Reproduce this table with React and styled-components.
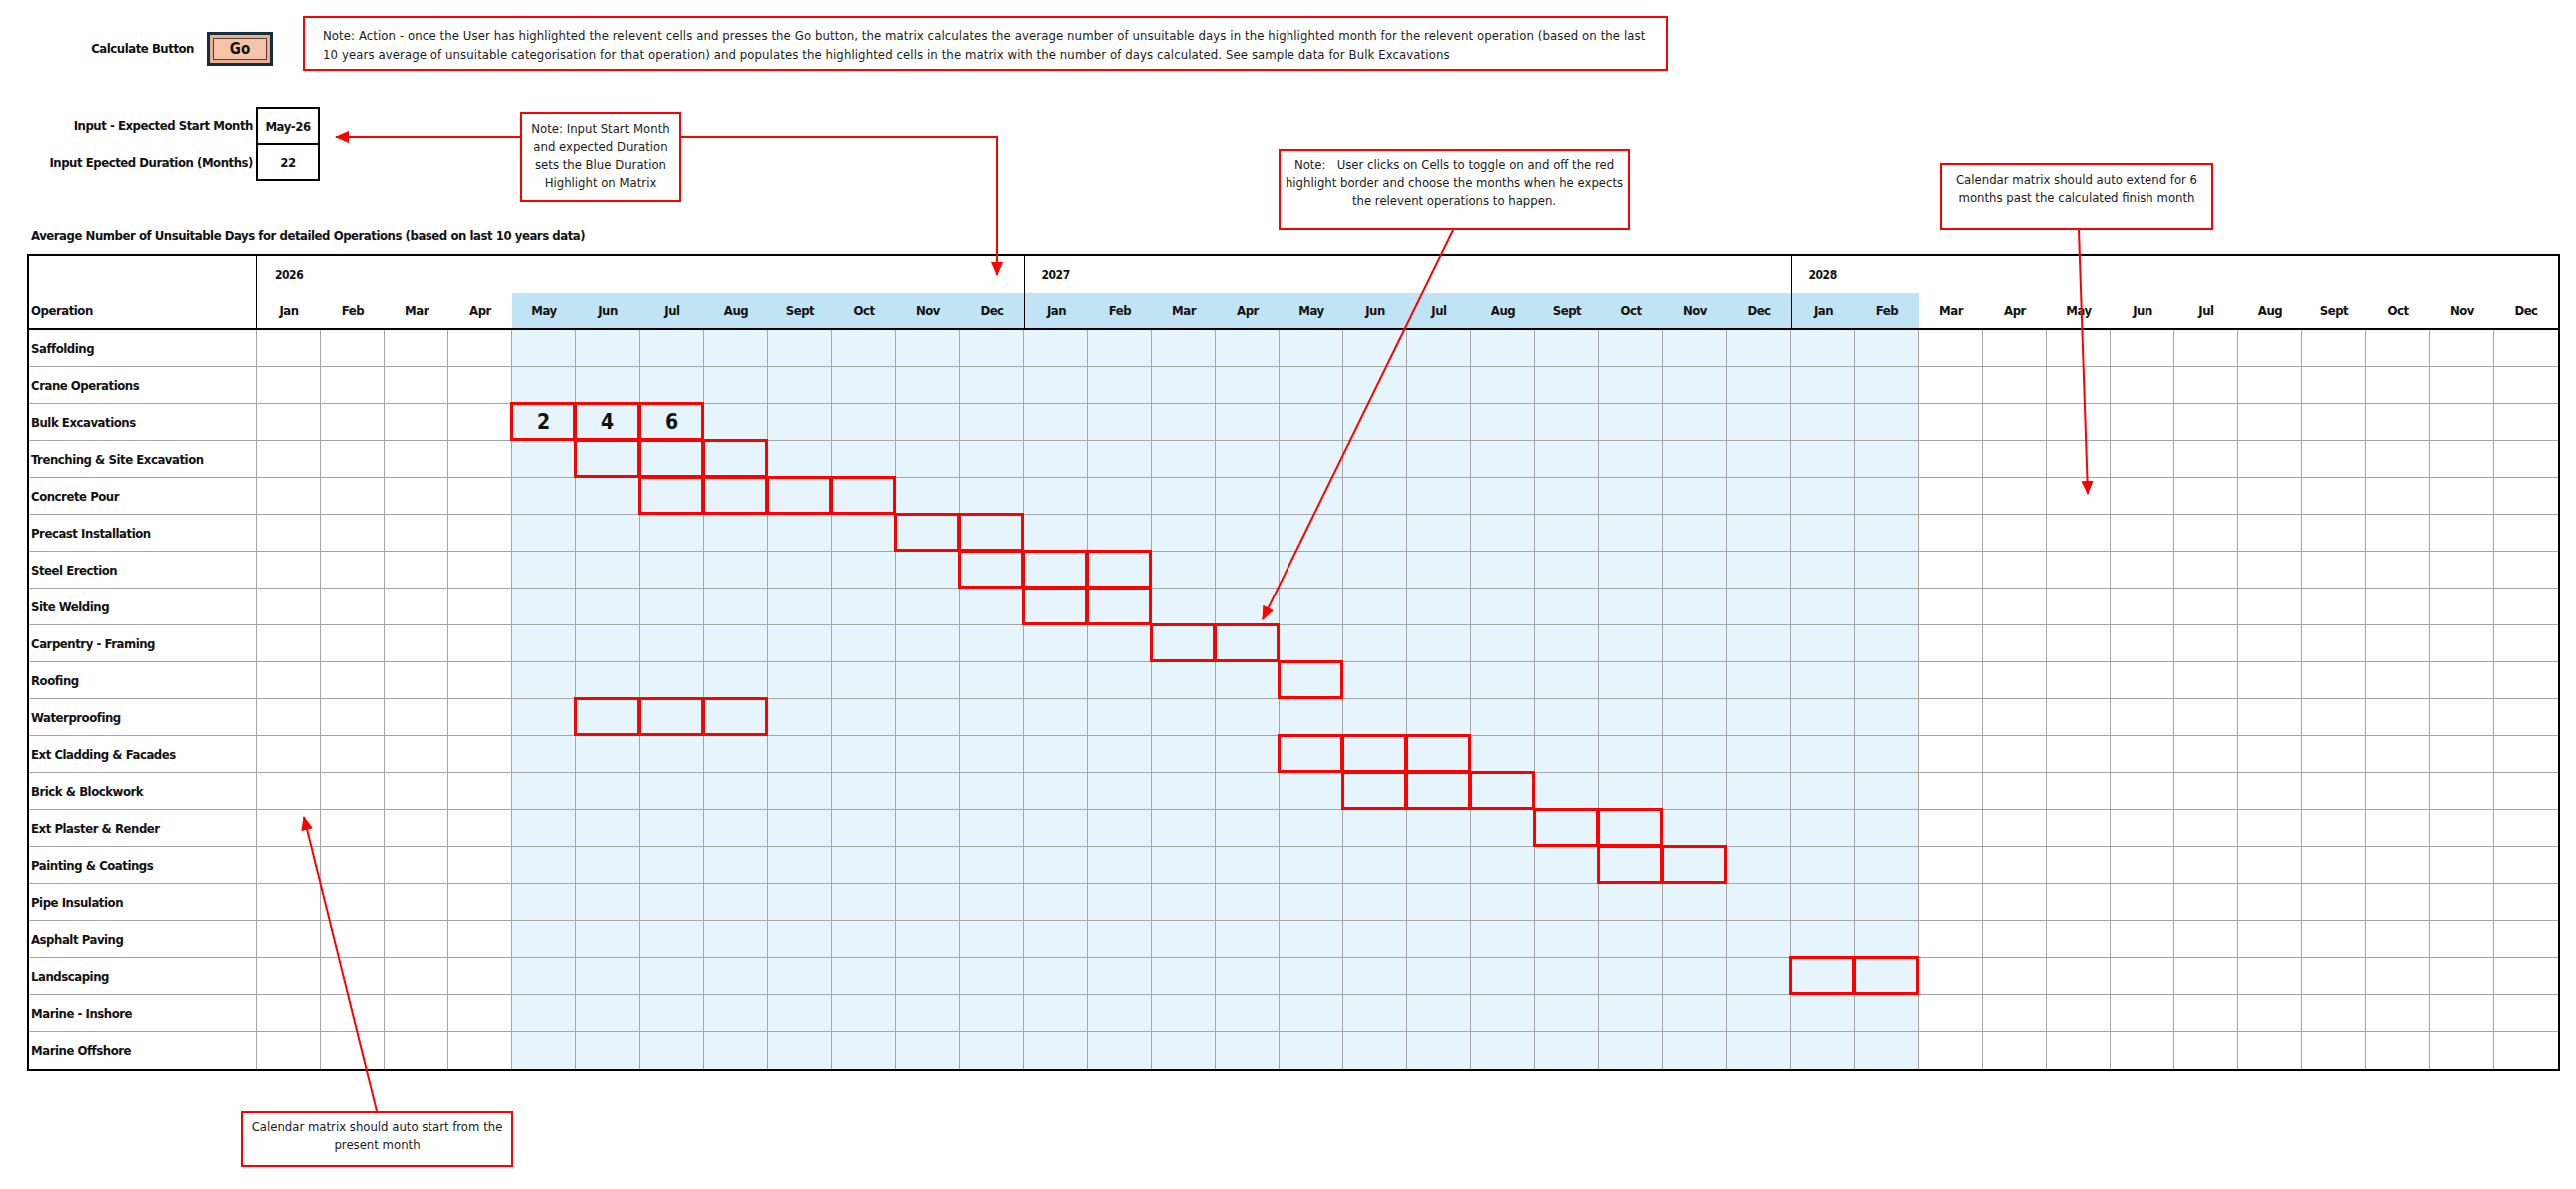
import React from "react";
import styled, { createGlobalStyle, css } from "styled-components";

const FONT = `"DejaVu Sans Condensed", "Liberation Sans Narrow", "Liberation Sans", sans-serif`;

const GlobalStyle = createGlobalStyle`
  html, body { margin: 0; padding: 0; background: #ffffff; }
  body { font-family: ${FONT}; color: #111; overflow: hidden; }
  * { box-sizing: border-box; }
`;

const boldText = css`
  font-weight: 700;
  font-size: 13px;
  letter-spacing: -0.45px;
  white-space: nowrap;
`;

const MONTHS = ["Jan", "Feb", "Mar", "Apr", "May", "Jun", "Jul", "Aug", "Sept", "Oct", "Nov", "Dec"];
const YEARS = [2026, 2027, 2028];
const OPERATIONS = [
  "Saffolding",
  "Crane Operations",
  "Bulk Excavations",
  "Trenching & Site Excavation",
  "Concrete Pour",
  "Precast Installation",
  "Steel Erection",
  "Site Welding",
  "Carpentry - Framing",
  "Roofing",
  "Waterproofing",
  "Ext Cladding & Facades",
  "Brick & Blockwork",
  "Ext Plaster & Render",
  "Painting & Coatings",
  "Pipe Insulation",
  "Asphalt Paving",
  "Landscaping",
  "Marine - Inshore",
  "Marine Offshore",
];
const START = 4;
const DURATION = 22;
const SELECTED = {
  2: [4, 5, 6],
  3: [5, 6, 7],
  4: [6, 7, 8, 9],
  5: [10, 11],
  6: [11, 12, 13],
  7: [12, 13],
  8: [14, 15],
  9: [16],
  10: [5, 6, 7],
  11: [16, 17, 18],
  12: [17, 18, 19],
  13: [20, 21],
  14: [21, 22],
  17: [24, 25],
};
const VALUES = { 2: { 4: 2, 5: 4, 6: 6 } };
const inRange = (i) => i >= START && i < START + DURATION;

const Page = styled.div`
  position: relative;
  width: 2579px;
  height: 1190px;
  overflow: hidden;
`;

const TopRow = styled.div`
  display: flex;
  align-items: flex-start;
  padding-top: 16px;
`;

const ButtonLabel = styled.span`
  ${boldText}
  width: 194px;
  margin-top: 16px;
  line-height: 34px;
  text-align: right;
`;

const GoButton = styled.button`
  margin: 16px 0 0 13px;
  width: 66px;
  height: 34px;
  border: 3px solid #12303d;
  background: #f6c4a8;
  box-shadow: inset 0 0 0 3px #eab096, inset 0 0 0 4px #5a3a2e;
  font-family: ${FONT};
  font-weight: 700;
  font-size: 15px;
  color: #111;
  padding: 0;
`;

const NoteFrame = styled.div`
  border: 2px solid #ff0000;
  background: #ffffff;
  font-size: 13px;
  line-height: 18px;
  color: #1a1a1a;
  white-space: nowrap;
`;

const ActionNote = styled(NoteFrame)`
  margin-left: 30px;
  width: 1367px;
  height: 55px;
  padding: 8px 0 0 18px;
  line-height: 19px;
  letter-spacing: 0.1px;
`;

const FloatNote = styled(NoteFrame)`
  position: absolute;
  left: ${(p) => p.$x}px;
  top: ${(p) => p.$y}px;
  width: ${(p) => p.$w}px;
  height: ${(p) => p.$h}px;
  padding-top: ${(p) => p.$pt}px;
  text-align: center;
  z-index: 3;
`;

const InputSection = styled.div`
  display: flex;
  margin-top: 36px;
`;

const InputLabels = styled.div`
  width: 256px;
  display: flex;
  flex-direction: column;
  padding-right: 3px;
`;

const InputLabel = styled.span`
  ${boldText}
  height: 37px;
  line-height: 37px;
  text-align: right;
`;

const InputBox = styled.div`
  width: 64px;
  border: 2px solid #000;
  display: flex;
  flex-direction: column;
`;

const InputCell = styled.div`
  height: ${(p) => (p.$first ? 36 : 34)}px;
  display: flex;
  align-items: center;
  justify-content: center;
  ${boldText}
  ${(p) => p.$first && css`border-bottom: 2px solid #000;`}
`;

const Title = styled.div`
  margin-top: 46px;
  padding-left: 31px;
  ${boldText}
  line-height: 18px;
`;

const Table = styled.div`
  display: grid;
  grid-template-columns: 228px repeat(36, 64px);
  grid-auto-rows: 37px;
  width: max-content;
  border: 2px solid #000;
  margin: 9px 0 0 27px;
`;

const OperationHead = styled.div`
  grid-row: span 2;
  display: flex;
  align-items: flex-end;
  padding: 0 0 0 2px;
  border-right: 1.5px solid #000;
  border-bottom: 2px solid #000;
  ${boldText}
  line-height: 35px;
`;

const YearHead = styled.div`
  grid-column: span 12;
  display: flex;
  align-items: center;
  padding-left: ${(p) => (p.$first ? 18 : 16.5)}px;
  ${boldText}
  font-size: 12px;
  ${(p) => !p.$first && css`border-left: 1.5px solid #000;`}
`;

const MonthHead = styled.div`
  display: flex;
  align-items: center;
  justify-content: center;
  ${boldText}
  border-bottom: 2px solid #000;
  background: ${(p) => (p.$blue ? "#c0e4f4" : "#ffffff")};
  ${(p) => p.$divider && css`border-left: 1.5px solid #000;`}
`;

const OpCell = styled.div`
  display: flex;
  align-items: center;
  padding-left: 2px;
  ${boldText}
  border-right: 1px solid #a6a6a6;
  ${(p) => !p.$last && css`border-bottom: 1px solid #a6a6a6;`}
`;

const DayCell = styled.div`
  position: relative;
  display: flex;
  align-items: center;
  justify-content: center;
  font-weight: 700;
  font-size: 21px;
  background: ${(p) => (p.$blue ? "#e6f4fb" : "#ffffff")};
  ${(p) => !p.$lastCol && css`border-right: 1px solid #a6a6a6;`}
  ${(p) => !p.$last && css`border-bottom: 1px solid #a6a6a6;`}
  ${(p) =>
    p.$selected &&
    css`
      &::after {
        content: "";
        position: absolute;
        top: -2px;
        left: -2px;
        right: -1px;
        bottom: -1px;
        border: 3px solid #ff0000;
        z-index: 1;
      }
    `}
`;

const ArrowLayer = styled.svg`
  position: absolute;
  left: 0;
  top: 0;
  width: 2579px;
  height: 1190px;
  pointer-events: none;
  z-index: 4;
`;

function Arrows() {
  return (
    <ArrowLayer viewBox="0 0 2579 1190">
      <defs>
        <marker id="ah" markerWidth="14" markerHeight="12" refX="13" refY="6" orient="auto" markerUnits="userSpaceOnUse">
          <path d="M0,0 L14,6 L0,12 Z" fill="#ff0000" />
        </marker>
      </defs>
      <g stroke="#ff0000" strokeWidth="2" fill="none">
        <line x1="521" y1="137" x2="336" y2="137" markerEnd="url(#ah)" />
        <polyline points="682,137 998,137 998,275" markerEnd="url(#ah)" />
        <line x1="1455" y1="230" x2="1264" y2="620" markerEnd="url(#ah)" />
        <line x1="2081" y1="230" x2="2090" y2="494" markerEnd="url(#ah)" />
        <line x1="377" y1="1112" x2="304" y2="818" markerEnd="url(#ah)" />
      </g>
    </ArrowLayer>
  );
}

function Matrix() {
  const cols = Array.from({ length: 36 }, (_, i) => i);
  return (
    <Table>
      <OperationHead>Operation</OperationHead>
      {YEARS.map((y, i) => (
        <YearHead key={y} $first={i === 0}>{y}</YearHead>
      ))}
      {cols.map((i) => (
        <MonthHead key={`m${i}`} $blue={inRange(i)} $divider={i > 0 && i % 12 === 0}>
          {MONTHS[i % 12]}
        </MonthHead>
      ))}
      {OPERATIONS.map((op, r) => {
        const last = r === OPERATIONS.length - 1;
        const sel = SELECTED[r] || [];
        const vals = VALUES[r] || {};
        return (
          <React.Fragment key={op}>
            <OpCell $last={last}>{op}</OpCell>
            {cols.map((i) => (
              <DayCell
                key={i}
                $blue={inRange(i)}
                $last={last}
                $lastCol={i === 35}
                $selected={sel.includes(i)}
              >
                {vals[i] ?? ""}
              </DayCell>
            ))}
          </React.Fragment>
        );
      })}
    </Table>
  );
}

export default function App() {
  return (
    <Page>
      <GlobalStyle />
      <TopRow>
        <ButtonLabel>Calculate Button</ButtonLabel>
        <GoButton>Go</GoButton>
        <ActionNote>
          Note: Action - once the User has highlighted the relevent cells and presses the Go button, the matrix calculates the average number of unsuitable days in the highlighted month for the relevent operation (based on the last
          <br />
          10 years average of unsuitable categorisation for that operation) and populates the highlighted cells in the matrix with the number of days calculated. See sample data for Bulk Excavations
        </ActionNote>
      </TopRow>
      <InputSection>
        <InputLabels>
          <InputLabel>Input - Expected Start Month</InputLabel>
          <InputLabel>Input Epected Duration (Months)</InputLabel>
        </InputLabels>
        <InputBox>
          <InputCell $first>May-26</InputCell>
          <InputCell>22</InputCell>
        </InputBox>
      </InputSection>
      <Title>Average Number of Unsuitable Days for detailed Operations (based on last 10 years data)</Title>
      <Matrix />

      <FloatNote $x={521} $y={112} $w={161} $h={90} $pt={6}>
        Note: Input Start Month
        <br />
        and expected Duration
        <br />
        sets the Blue Duration
        <br />
        Highlight on Matrix
      </FloatNote>
      <FloatNote $x={1280} $y={149} $w={352} $h={81} $pt={5}>
        Note:&nbsp;&nbsp; User clicks on Cells to toggle on and off the red
        <br />
        highlight border and choose the months when he expects
        <br />
        the relevent operations to happen.
      </FloatNote>
      <FloatNote $x={1942} $y={163} $w={274} $h={67} $pt={6}>
        Calendar matrix should auto extend for 6
        <br />
        months past the calculated finish month
      </FloatNote>
      <FloatNote $x={241} $y={1112} $w={273} $h={56} $pt={5}>
        Calendar matrix should auto start from the
        <br />
        present month
      </FloatNote>
      <Arrows />
    </Page>
  );
}
